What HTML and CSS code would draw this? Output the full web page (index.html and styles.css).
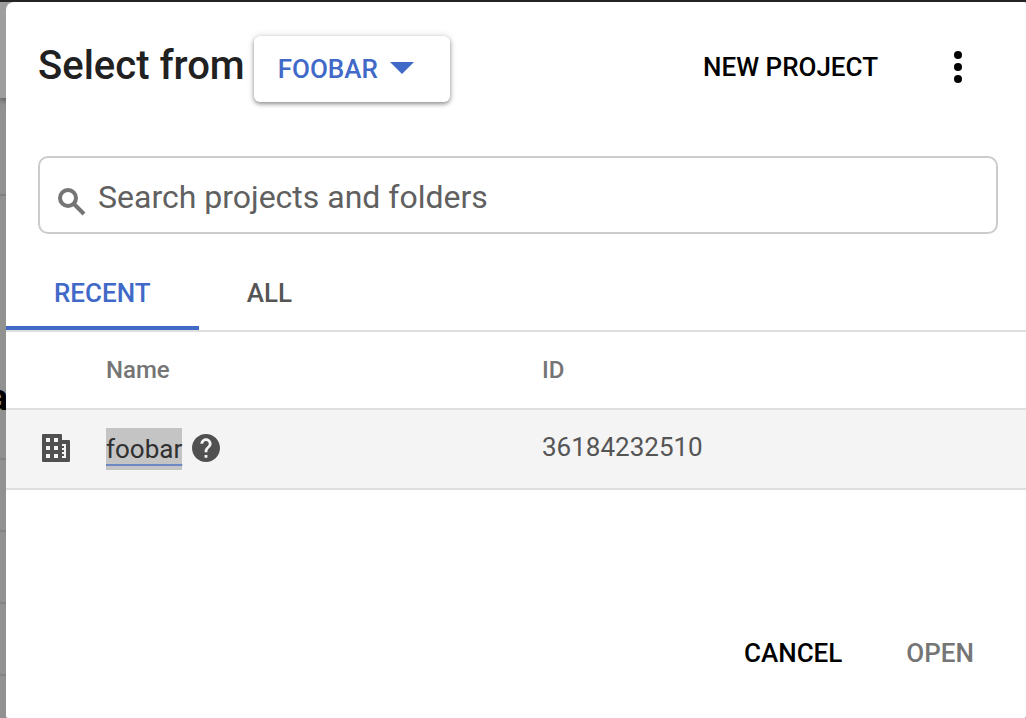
FILE: index.html
```html
<!DOCTYPE html>
<html lang="en">
<head>
<meta charset="utf-8">
<meta name="viewport" content="width=device-width, initial-scale=1">
<title>Select a project</title>
<link rel="stylesheet" href="styles.css">
</head>
<body>
<div class="backdrop" aria-hidden="true">
  <div class="page-toolbar"></div>
  <div class="page-section"></div>
  <div class="page-heading"><span>a</span></div>
  <div class="page-row"></div>
  <div class="page-row"></div>
  <div class="page-row"></div>
</div>
<main class="dialog" role="dialog" aria-labelledby="dialog-title">
  <header class="dialog-header">
    <h1 class="title" id="dialog-title">Select from</h1>
    <button class="button picker" type="button">FOOBAR
      <svg class="caret" viewBox="0 0 24 12" aria-hidden="true"><path d="M0 0h24L12 12z"/></svg>
    </button>
    <div class="header-actions">
      <button class="button" type="button">NEW PROJECT</button>
      <button class="button menu" type="button" aria-label="More options">
        <svg class="dots" viewBox="0 0 8 32" aria-hidden="true"><circle cx="4" cy="4" r="4"/><circle cx="4" cy="16" r="4"/><circle cx="4" cy="28" r="4"/></svg>
      </button>
    </div>
  </header>
  <label class="search">
    <svg class="search-icon" viewBox="0 0 28 28" aria-hidden="true"><circle cx="10" cy="10" r="8"/><path d="M15.500 15.500L26 26"/></svg>
    <input class="search-input" type="text" placeholder="Search projects and folders" aria-label="Search projects and folders">
  </label>
  <nav class="tabs" role="tablist">
    <button class="button tab tab-active" type="button" role="tab" aria-selected="true">RECENT</button>
    <button class="button tab" type="button" role="tab" aria-selected="false">ALL</button>
  </nav>
  <table class="projects">
    <colgroup><col class="col-icon"><col class="col-name"><col></colgroup>
    <thead>
      <tr><th></th><th scope="col">Name</th><th scope="col">ID</th></tr>
    </thead>
    <tbody>
      <tr>
        <td class="icon-cell"><svg class="icon" viewBox="0 0 28 28" aria-hidden="true"><path fill-rule="evenodd" d="M1 0h18a1 1 0 0 1 1 1v5h7a1 1 0 0 1 1 1v20a1 1 0 0 1-1 1H1a1 1 0 0 1-1-1V1a1 1 0 0 1 1-1zM4 4v4h4V4zm8 0v4h4V4zM4 12v4h4v-4zm8 0v4h4v-4zM4 20v4h4v-4zm8 0v4h4v-4zM20 10v2h2v2h-2v2h2v2h-2v2h2v2h-2v2h4V10z"/></svg></td>
        <td>
          <div class="name">
            <a class="project-link" href="#">foobar</a>
            <svg class="icon" viewBox="2 2 20 20" aria-hidden="true"><path d="M12 2C6.480 2 2 6.480 2 12s4.480 10 10 10 10-4.480 10-10S17.520 2 12 2zm1 17h-2v-2h2v2zm2.070-7.750l-.9.920C13.450 12.900 13 13.500 13 15h-2v-.5c0-1.100.45-2.100 1.170-2.830l1.240-1.260c.37-.36.59-.86.59-1.410 0-1.100-.9-2-2-2s-2 .9-2 2H8c0-2.210 1.790-4 4-4s4 1.790 4 4c0 .88-.36 1.680-.93 2.250z"/></svg>
          </div>
        </td>
        <td class="id-cell">36184232510</td>
      </tr>
    </tbody>
  </table>
  <footer class="actions">
    <button class="button" type="button">CANCEL</button>
    <button class="button" type="button" disabled>OPEN</button>
  </footer>
</main>
</body>
</html>
```

FILE: styles.css
```css
* {
  box-sizing: border-box;
}

body {
  margin: 0;
  min-height: 100vh;
  padding: 2px 0 0 6px;
  display: flex;
  background: #242326;
  font-family: Roboto, "Liberation Sans", sans-serif;
  font-size: 26px;
  color: #555;
}

/* Dimmed page behind the dialog */
.backdrop {
  position: absolute;
  inset: 2px 0 0;
  overflow: hidden;
  background: #919191;
}

.page-toolbar {
  height: 96px;
  background: #9e9e9e;
  box-shadow: 0 2px 6px #555;
}

.page-section {
  height: 98px;
  border-bottom: 2px solid #808080;
}

.page-heading {
  display: flex;
  align-items: flex-end;
  height: 264px;
  padding-bottom: 44px;
  border-bottom: 2px solid #848484;
  font-size: 36px;
  font-weight: 700;
  line-height: 32px;
  color: #000;
}

.page-heading span {
  display: flex;
  justify-content: flex-end;
  width: 8px;
}

.page-row {
  height: 72px;
  border-bottom: 2px solid #848484;
}

.dialog {
  position: relative;
  display: flex;
  flex: 1;
  flex-direction: column;
  min-width: 0;
  background: #fff;
  border-radius: 8px 2px 2px 2px;
}

.button {
  padding: 0;
  border: 0;
  background: none;
  font: inherit;
  font-weight: 500;
  line-height: 32px;
  color: #000;
}

.button:disabled {
  color: #757575;
}

.dialog-header {
  display: flex;
  align-items: center;
  padding: 34px 48px 0 32px;
}

.title {
  margin: 0 9px 6px 0;
  font-size: 40px;
  font-weight: 500;
  line-height: 48px;
  color: #212121;
}

.picker {
  display: flex;
  align-items: center;
  gap: 12px;
  height: 66px;
  padding: 0 36px 0 24px;
  border-radius: 6px;
  box-shadow: 0 2px 4px rgba(0, 0, 0, 0.4), 0 0 8px rgba(0, 0, 0, 0.12);
  color: #4169c8;
}

.caret {
  width: 24px;
  height: 12px;
  margin-bottom: 2px;
  fill: #4169c8;
}

.header-actions {
  display: flex;
  align-items: center;
  gap: 60px;
  margin-left: auto;
  padding-bottom: 4px;
}

.menu {
  display: flex;
  justify-content: center;
  width: 40px;
}

.dots {
  width: 8px;
  height: 32px;
}

.search {
  display: flex;
  align-items: center;
  gap: 12px;
  height: 78px;
  margin: 54px 28px 0 32px;
  padding: 4px 18px 0;
  border: 2px solid #ccc;
  border-radius: 10px;
}

.search-icon {
  width: 28px;
  height: 28px;
  margin-top: 10px;
  fill: none;
  stroke: #757575;
  stroke-width: 4;
}

.search-input {
  flex: 1;
  min-width: 0;
  height: 40px;
  padding: 0;
  border: 0;
  outline: 0;
  background: none;
  font: inherit;
  font-size: 32px;
  color: #555;
}

.search-input::placeholder {
  color: #606060;
  opacity: 1;
}

.tabs {
  display: flex;
  margin-top: 20px;
  border-bottom: 2px solid #dedede;
}

.tab {
  height: 76px;
  padding: 6px 48px 0;
  border-bottom: 4px solid transparent;
  color: #555;
}

.tab-active {
  border-color: #4169c8;
  color: #4169c8;
}

.projects {
  width: 100%;
  table-layout: fixed;
  border-collapse: separate;
  border-spacing: 0;
}

.col-icon {
  width: 100px;
}

.col-name {
  width: 436px;
}

.projects th,
.projects td {
  padding: 0;
  border-bottom: 2px solid #dedede;
  text-align: left;
}

.projects th {
  height: 78px;
  font-size: 24px;
  font-weight: 500;
  color: #757575;
}

.projects td {
  height: 80px;
  background: #f4f4f4;
}

.projects .icon-cell {
  padding: 0 0 2px 36px;
}

.projects .id-cell {
  padding-bottom: 4px;
}

.icon {
  display: block;
  width: 28px;
  height: 28px;
  fill: #505050;
}

.name {
  display: flex;
  align-items: center;
  gap: 10px;
}

.name .icon {
  margin-bottom: 2px;
}

.project-link {
  padding: 2px 0;
  background: #c4c4c4;
  line-height: 38px;
  color: #303030;
  text-decoration: underline 2px #6c87c4;
  text-underline-offset: 6px;
}

.actions {
  display: flex;
  justify-content: flex-end;
  gap: 64px;
  margin-top: auto;
  padding: 0 52px 49px;
}
```
